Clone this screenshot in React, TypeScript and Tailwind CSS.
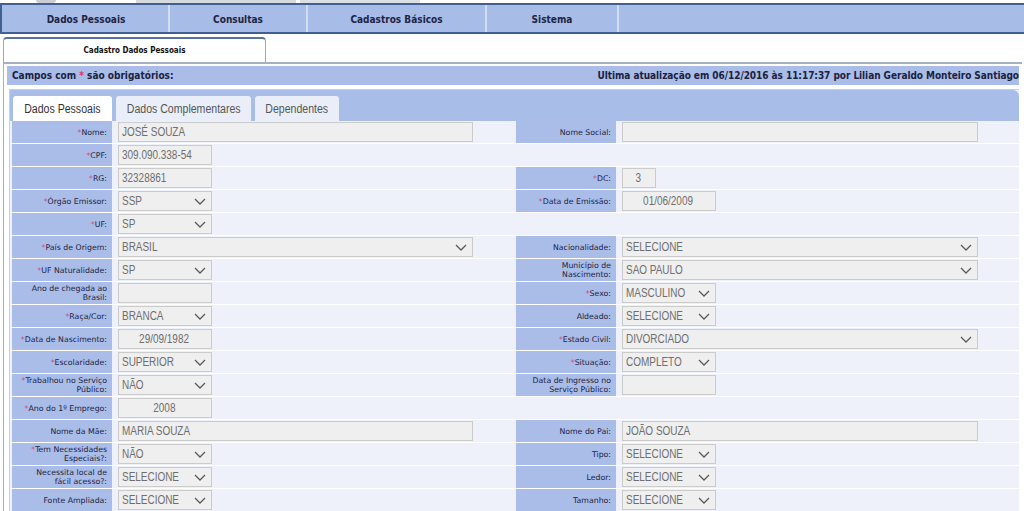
import React from "react";

type Field = {
  lines: string[];
  req?: boolean;
  kind: "text" | "select";
  value: string;
  w: number;
  center?: boolean;
};

type Row = { left: Field; right?: Field };

const rows: Row[] = [
  {
    left: { lines: ["Nome:"], req: true, kind: "text", value: "JOSÉ SOUZA", w: 355 },
    right: { lines: ["Nome Social:"], kind: "text", value: "", w: 356 },
  },
  { left: { lines: ["CPF:"], req: true, kind: "text", value: "309.090.338-54", w: 94 } },
  {
    left: { lines: ["RG:"], req: true, kind: "text", value: "32328861", w: 94 },
    right: { lines: ["DC:"], req: true, kind: "text", value: "3", w: 34, center: true },
  },
  {
    left: { lines: ["Órgão Emissor:"], req: true, kind: "select", value: "SSP", w: 94 },
    right: { lines: ["Data de Emissão:"], req: true, kind: "text", value: "01/06/2009", w: 94, center: true },
  },
  { left: { lines: ["UF:"], req: true, kind: "select", value: "SP", w: 94 } },
  {
    left: { lines: ["País de Origem:"], req: true, kind: "select", value: "BRASIL", w: 355 },
    right: { lines: ["Nacionalidade:"], kind: "select", value: "SELECIONE", w: 356 },
  },
  {
    left: { lines: ["UF Naturalidade:"], req: true, kind: "select", value: "SP", w: 94 },
    right: { lines: ["Município de", "Nascimento:"], kind: "select", value: "SAO PAULO", w: 356 },
  },
  {
    left: { lines: ["Ano de chegada ao", "Brasil:"], kind: "text", value: "", w: 94 },
    right: { lines: ["Sexo:"], req: true, kind: "select", value: "MASCULINO", w: 94 },
  },
  {
    left: { lines: ["Raça/Cor:"], req: true, kind: "select", value: "BRANCA", w: 94 },
    right: { lines: ["Aldeado:"], kind: "select", value: "SELECIONE", w: 94 },
  },
  {
    left: { lines: ["Data de Nascimento:"], req: true, kind: "text", value: "29/09/1982", w: 94, center: true },
    right: { lines: ["Estado Civil:"], req: true, kind: "select", value: "DIVORCIADO", w: 356 },
  },
  {
    left: { lines: ["Escolaridade:"], req: true, kind: "select", value: "SUPERIOR", w: 94 },
    right: { lines: ["Situação:"], req: true, kind: "select", value: "COMPLETO", w: 94 },
  },
  {
    left: { lines: ["Trabalhou no Serviço", "Público:"], req: true, kind: "select", value: "NÃO", w: 94 },
    right: { lines: ["Data de Ingresso no", "Serviço Público:"], kind: "text", value: "", w: 94 },
  },
  { left: { lines: ["Ano do 1º Emprego:"], req: true, kind: "text", value: "2008", w: 94, center: true } },
  {
    left: { lines: ["Nome da Mãe:"], kind: "text", value: "MARIA SOUZA", w: 355 },
    right: { lines: ["Nome do Pai:"], kind: "text", value: "JOÃO SOUZA", w: 356 },
  },
  {
    left: { lines: ["Tem Necessidades", "Especiais?:"], req: true, kind: "select", value: "NÃO", w: 94 },
    right: { lines: ["Tipo:"], kind: "select", value: "SELECIONE", w: 94 },
  },
  {
    left: { lines: ["Necessita local de", "fácil acesso?:"], kind: "select", value: "SELECIONE", w: 94 },
    right: { lines: ["Ledor:"], kind: "select", value: "SELECIONE", w: 94 },
  },
  {
    left: { lines: ["Fonte Ampliada:"], kind: "select", value: "SELECIONE", w: 94 },
    right: { lines: ["Tamanho:"], kind: "select", value: "SELECIONE", w: 94 },
  },
];

const boldFont = "font-['DejaVu_Sans_Condensed','DejaVu_Sans',sans-serif] font-bold";
const labelFont = "font-['DejaVu_Sans',Verdana,sans-serif]";
const valueFont = "font-['Liberation_Sans',Arial,sans-serif]";

function Chevron() {
  return (
    <svg width="12" height="7" viewBox="0 0 12 7" className="shrink-0 ml-auto">
      <path d="M1 1 L6 6 L11 1" fill="none" stroke="#5a5a5a" strokeWidth="1.3" />
    </svg>
  );
}

function Label({ f }: { f: Field }) {
  return (
    <div
      className={`w-[100px] shrink-0 h-full bg-[#a9bde8] flex flex-col justify-center items-end pr-[5px] text-right text-[7.8px] leading-[9px] text-[#1f2340] ${labelFont}`}
    >
      {f.lines.map((l, i) => (
        <span key={i} className="whitespace-nowrap">
          {i === 0 && f.req && <span className="text-[#e0336e]">*</span>}
          {l}
        </span>
      ))}
    </div>
  );
}

function Input({ f }: { f: Field }) {
  return (
    <div
      style={{ width: f.w }}
      className={`h-[20px] bg-[#efefef] border border-[#cbcbcb] flex items-center pl-[3px] pr-[5px] text-[12px] text-[#6e6e6e] ${valueFont}`}
    >
      <div className={`flex-1 min-w-0 whitespace-nowrap flex ${f.center ? "justify-center" : "justify-start"}`}>
        <span className={`inline-block scale-x-[0.83] ${f.center ? "origin-center" : "origin-left"}`}>{f.value}</span>
      </div>
      {f.kind === "select" && <Chevron />}
    </div>
  );
}

function Cell({ f }: { f?: Field }) {
  if (!f) return null;
  return (
    <div className="flex h-full items-center gap-[6px]">
      <Label f={f} />
      <Input f={f} />
    </div>
  );
}

const menu = [
  { t: "Dados Pessoais", w: 166 },
  { t: "Consultas", w: 138 },
  { t: "Cadastros Básicos", w: 179 },
  { t: "Sistema", w: 132 },
];

const tabs = [
  { t: "Dados Pessoais", w: 99, active: true },
  { t: "Dados Complementares", w: 135, active: false },
  { t: "Dependentes", w: 84, active: false },
];

export default function App() {
  return (
    <div className="w-[1024px] h-[511px] overflow-hidden bg-white">
      {/* cropped toolbar strip */}
      <div className="h-[3px] flex">
        <div className="ml-[36px] w-[20px] bg-[#c9ccd2] rounded-b" />
        <div className="ml-[80px] w-[160px] bg-[#d6d9de]" />
        <div className="ml-[4px] w-[120px] bg-[#dcdfe3]" />
      </div>

      {/* main menu */}
      <div className="h-[31px] border-y-2 border-l-2 border-[#3f6090] bg-[#a7bce6] flex pl-[2px]">
        {menu.map((m) => (
          <div
            key={m.t}
            style={{ width: m.w }}
            className={`h-full flex items-center justify-center pt-[1px] border-r-2 border-[#d3ddf1] text-[10px] text-[#1d2444] ${boldFont}`}
          >
            {m.t}
          </div>
        ))}
      </div>

      {/* page tab */}
      <div className="h-[28px] pt-[3px] pl-[3px]">
        <div
          className={`w-[263px] h-full bg-white border-x border-t-2 border-[#9aa7bc] border-t-[#587399] rounded-t-[4px] flex items-center justify-center text-[8px] text-[#111] ${boldFont}`}
        >
          Cadastro Dados Pessoais
        </div>
      </div>

      {/* panel */}
      <div className="ml-[3px] mr-[2px] border-l border-t-2 border-[#a3b0c6] pt-[2px] pl-[3px] pr-[3px]">
        <div
          className={`h-[19px] bg-[#a9bde8] flex items-center justify-between pl-[5px] text-[10px] text-[#1b2140] ${boldFont}`}
        >
          <span>
            Campos com <span className="text-[#e0336e]">*</span> são obrigatórios:
          </span>
          <span className="tracking-[-0.05px]">
            Ultima atualização em 06/12/2016 às 11:17:37 por Lilian Geraldo Monteiro Santiago
          </span>
        </div>

        <div className="mt-[4px] ml-[2px] border-l border-t border-[#c9cfdb] bg-[#eef1fa]">
          {/* inner tabs */}
          <div className="h-[31px] bg-[#a8bde8] rounded-tr-[6px] flex items-end pl-[3px] gap-[4px]">
            {tabs.map((t) => (
              <div
                key={t.t}
                style={{ width: t.w }}
                className={`h-[25px] rounded-t-[3px] flex items-center justify-center whitespace-nowrap text-[12px] ${valueFont} ${
                  t.active ? "bg-white text-[#333]" : "bg-[#e9eef8] text-[#555]"
                }`}
              >
                <span className="inline-block scale-x-[0.88]">{t.t}</span>
              </div>
            ))}
          </div>

          {rows.map((r, i) => (
            <div key={i} className="h-[23px] flex border-b border-white pl-[2px]">
              <div className="w-[488px] shrink-0 h-full">
                <Cell f={r.left} />
              </div>
              <div className="pl-[16px] h-full">
                <Cell f={r.right} />
              </div>
            </div>
          ))}
        </div>
      </div>
    </div>
  );
}
